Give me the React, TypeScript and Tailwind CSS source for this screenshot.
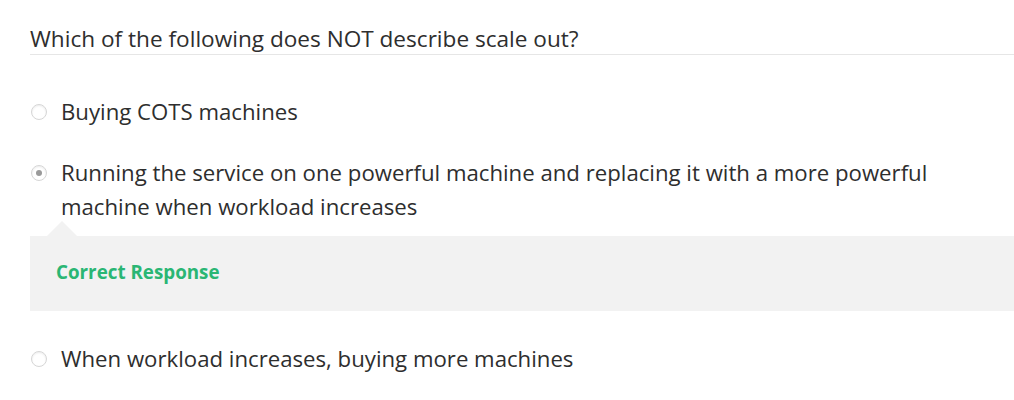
import React from "react";

function Radio({ checked }: { checked?: boolean }) {
  return (
    <span className="mt-[9px] flex h-4 w-4 shrink-0 items-center justify-center rounded-full border border-[#d6d6d6] bg-white shadow-[inset_0_1px_2px_rgba(0,0,0,0.08)]">
      {checked && <span className="h-[6px] w-[6px] rounded-full bg-[#9a9a9a]" />}
    </span>
  );
}

function Option({ text, checked, className }: { text: string; checked?: boolean; className?: string }) {
  return (
    <div className={"flex items-start gap-[14px] pl-[1px] " + (className ?? "")}>
      <Radio checked={checked} />
      <span className="max-w-[880px] leading-[34px]">{text}</span>
    </div>
  );
}

export default function App() {
  return (
    <div className="h-[400px] w-[1014px] overflow-hidden bg-white pl-[30px] text-[22.2px] text-[#2e2e2e] [font-family:'Open_Sans',sans-serif]">
      <div className="border-b border-[#e6e6e6] pt-[25px] pb-[1px] text-[22.6px] leading-[28px]">
        Which of the following does NOT describe scale out?
      </div>

      <Option className="mt-[40px]" text="Buying COTS machines" />
      <Option
        className="mt-[27px]"
        checked
        text="Running the service on one powerful machine and replacing it with a more powerful machine when workload increases"
      />

      <div className="relative mt-[12px] flex h-[75px] items-center bg-[#f2f2f2] pl-[26px]">
        <span className="absolute -top-[15px] left-[17px] h-0 w-0 border-x-[15px] border-b-[15px] border-x-transparent border-b-[#f2f2f2]" />
        <span className="-mt-[2px] text-[18.8px] font-bold text-[#2ab674]">Correct Response</span>
      </div>

      <Option className="mt-[31px]" text="When workload increases, buying more machines" />
    </div>
  );
}
